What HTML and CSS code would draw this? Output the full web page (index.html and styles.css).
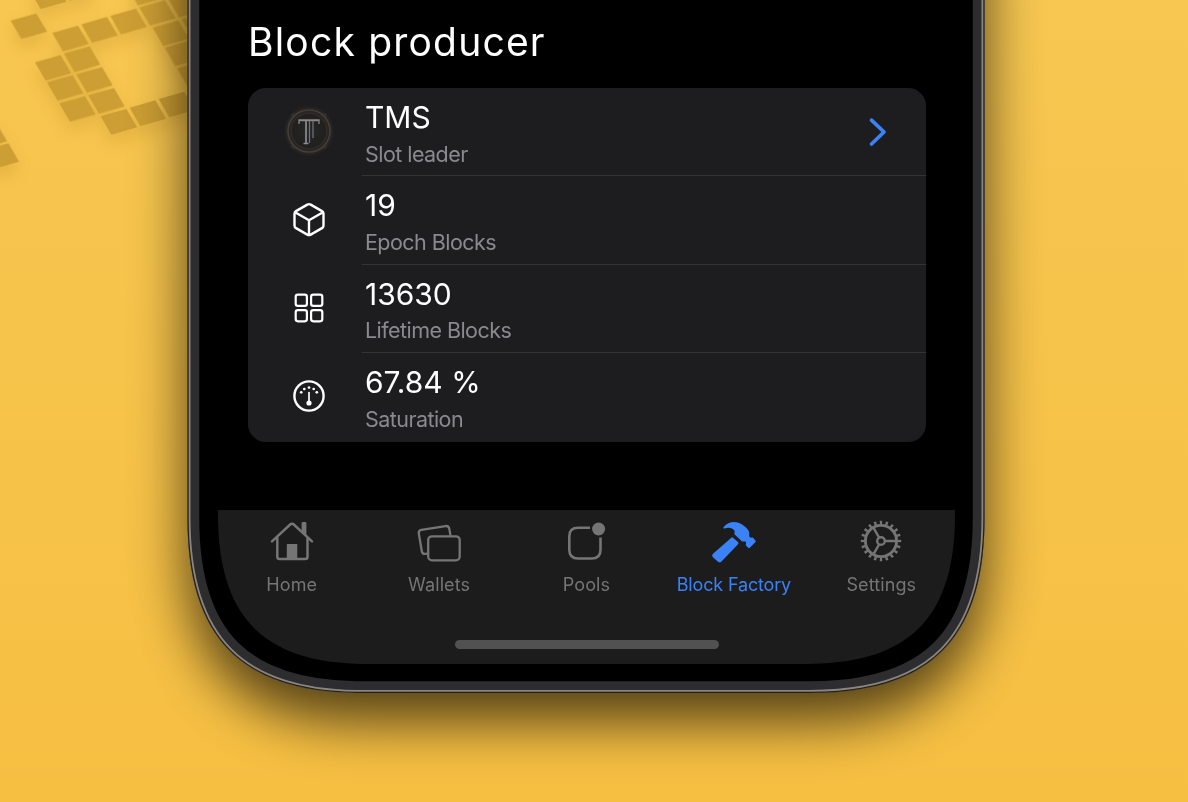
FILE: index.html
```html
<!DOCTYPE html>
<html lang="en">
<head>
<meta charset="utf-8">
<title>Block Factory</title>
<link rel="stylesheet" href="styles.css">
</head>
<body>
<svg class="backdrop" viewBox="0 0 1188 802" aria-hidden="true">
  <defs>
    <filter id="soft" x="-20%" y="-20%" width="140%" height="140%"><feGaussianBlur stdDeviation="28"/></filter>
    <filter id="tileShadow" x="-20%" y="-20%" width="140%" height="150%"><feGaussianBlur stdDeviation="24"/></filter>
    <path id="body" d="M187.5 -200V518C187.5 638.8 241.7 693 362.5 693H809.5C930.3 693 984.5 638.8 984.5 518V-200Z"/>
    <clipPath id="bodyClip"><use href="#body"/></clipPath>
    <path id="t" d="M0 0L77 -22L109 33L32 55Z"/>
    <g id="tiles">
      <use href="#t" x="32" y="62"/><use href="#t" x="90" y="-28"/><use href="#t" x="177" y="-53"/>
      <use href="#t" x="157" y="99"/><use href="#t" x="244" y="73"/><use href="#t" x="331" y="48"/><use href="#t" x="418" y="22"/>
      <use href="#t" x="382" y="-39"/><use href="#t" x="505" y="-3"/><use href="#t" x="469" y="-64"/>
      <use href="#t" x="192" y="161"/><use href="#t" x="105" y="187"/><use href="#t" x="229" y="223"/><use href="#t" x="141" y="247"/>
      <use href="#t" x="265" y="286"/><use href="#t" x="178" y="310"/><use href="#t" x="302" y="349"/><use href="#t" x="389" y="323"/><use href="#t" x="476" y="297"/>
      <use href="#t" x="458" y="83"/><use href="#t" x="545" y="58"/><use href="#t" x="494" y="143"/><use href="#t" x="531" y="205"/>
      <use href="#t" x="-52" y="452"/><use href="#t" x="-88" y="391"/>
    </g>
  </defs>
  <g transform="scale(.33333)">
    <use href="#tiles" y="26" fill="#9a6a10" opacity=".2" filter="url(#tileShadow)"/>
    <use href="#tiles" fill="#cc9e34"/>
  </g>
  <use href="#body" y="28" opacity=".68" filter="url(#soft)"/>
  <g clip-path="url(#bodyClip)">
    <use href="#body" fill="#000"/>
    <use href="#body" fill="none" stroke="#2d2d2f" stroke-width="23.5"/>
    <use href="#body" fill="none" stroke="#8b8581" stroke-width="6"/>
    <use href="#body" fill="none" stroke="#262016" stroke-width="2.4"/>
  </g>
</svg>
<main class="phone">
  <h1 class="title">Block producer</h1>
  <section class="card">
    <div class="row">
      <div class="icon">
        <svg width="60" height="60" viewBox="0 0 60 60" fill="none">
          <defs><radialGradient id="coin"><stop offset="0" stop-color="#262728"/><stop offset=".6" stop-color="#21201f"/><stop offset=".85" stop-color="#2b2724"/><stop offset="1" stop-color="#1d1d1f"/></radialGradient></defs>
          <circle cx="30" cy="30" r="25.500" fill="url(#coin)"/>
          <path d="M13 17v-4h5M42 13h5v4M13 43v4h5M42 47h5v-4" stroke="#38342f"/>
          <circle cx="30" cy="30" r="21" stroke="#443e38" stroke-width="1.500"/>
          <circle cx="30" cy="30" r="18" stroke="#34312e"/>
          <path d="M20 23v-4h20v4M20 19.500h20" stroke="#8c8884" stroke-width="1.300"/>
          <path d="M27 20v22M24.500 42.500h5" stroke="#8b8d8f" stroke-width="1.700"/>
          <path d="M30.500 20v22M34 20v17" stroke="#6e7275" stroke-width="1.300"/>
        </svg>
      </div>
      <div class="cell"><div class="value">TMS</div><div class="label">Slot leader</div>
        <svg class="chevron" width="20" height="30" viewBox="0 0 20 30" fill="none" stroke="#3b82f6" stroke-width="3.700" stroke-linecap="round" stroke-linejoin="round"><path d="M3.500 3.200L16 15L3.500 27"/></svg>
      </div>
    </div>
    <div class="row">
      <div class="icon"><svg width="36" height="36" viewBox="0 0 36 36" fill="none" stroke="#fff" stroke-width="2.400" stroke-linejoin="round" stroke-linecap="round"><path d="M16.300 2.600Q18 1.700 19.700 2.600L31 9.100Q32.500 10 32.500 11.700V23.500Q32.500 25.200 31 26.100L19.700 32.600Q18 33.500 16.300 32.600L5 26.100Q3.500 25.200 3.500 23.500V11.700Q3.500 10 5 9.100ZM4 10.300L18 18.200L32 10.300M18 18.200V33"/></svg></div>
      <div class="cell"><div class="value">19</div><div class="label">Epoch Blocks</div></div>
    </div>
    <div class="row">
      <div class="icon"><svg width="36" height="36" viewBox="0 0 36 36" fill="none" stroke="#fff" stroke-width="2.200"><rect x="4.700" y="4.700" width="11.200" height="11.200" rx="2.200"/><rect x="20.100" y="4.700" width="11.200" height="11.200" rx="2.200"/><rect x="4.700" y="20.100" width="11.200" height="11.200" rx="2.200"/><rect x="20.100" y="20.100" width="11.200" height="11.200" rx="2.200"/></svg></div>
      <div class="cell"><div class="value">13630</div><div class="label">Lifetime Blocks</div></div>
    </div>
    <div class="row">
      <div class="icon"><svg width="36" height="36" viewBox="0 0 36 36" fill="#fff"><circle cx="18" cy="18" r="14.600" fill="none" stroke="#fff" stroke-width="2.400"/><path d="M18 14.500V25" stroke="#fff" stroke-width="1.700" stroke-linecap="round"/><circle cx="18" cy="25" r="2.600"/><circle cx="10.200" cy="14.300" r="1.350"/><circle cx="13.300" cy="11" r="1.350"/><circle cx="18" cy="9.600" r="1.350"/><circle cx="22.700" cy="11" r="1.350"/><circle cx="25.800" cy="14.300" r="1.350"/></svg></div>
      <div class="cell"><div class="value">67.84 %</div><div class="label">Saturation</div></div>
    </div>
  </section>
  <nav class="tabs">
    <div class="tablist">
      <div class="tab"><svg width="48" height="44" viewBox="0 0 48 44" fill="none" stroke="#757575" stroke-width="2.500" stroke-linejoin="round" stroke-linecap="round"><path d="M4 21.400L22.200 4.500Q24 2.900 25.800 4.500L44 21.400M9.300 17.500V36.800Q9.300 39.100 11.600 39.100H37.200Q39.500 39.100 39.500 36.800V17.500"/><path d="M34.300 11.500V3.300Q34.300 2.800 34.800 2.800H37.200Q37.700 2.800 37.700 3.300V14.800Z" fill="#757575" stroke-width="1.400"/><path d="M19.500 24.800H28.600V39H19.500Z" fill="#757575" stroke-width="1.400"/></svg><span class="name">Home</span></div>
      <div class="tab"><svg width="48" height="44" viewBox="0 0 48 44" fill="none" stroke="#757575" stroke-width="2.300" stroke-linejoin="round" stroke-linecap="round"><rect x="13.200" y="16.300" width="31.500" height="24" rx="3.800"/><path d="M12.500 33.600L10.500 33.900Q7.300 34.300 6.800 31.300L3.800 13.500Q3.300 10.500 6.400 9.900L30.500 6.100Q33.500 5.600 34.200 8.600L35.400 14.800"/></svg><span class="name">Wallets</span></div>
      <div class="tab"><svg width="48" height="44" viewBox="0 0 48 44" fill="none" stroke="#757575" stroke-width="2.600"><path d="M28 7.700H16Q7.300 7.700 7.300 16.200V29.800Q7.300 38.500 16 38.500H29.800Q38.500 38.500 38.500 29.800V17.500"/><circle cx="36.600" cy="9" r="6.500" fill="#757575" stroke="none"/></svg><span class="name">Pools</span></div>
      <div class="tab active"><svg width="48" height="44" viewBox="0 0 48 44" fill="#3b82f6"><path transform="translate(-.5 -.6)" d="M14.200 7.700C17 4.500 20.500 2.700 24.500 2.700C30 2.700 34 5.600 38 9.800C40 11.900 40 13.500 39.700 16.200C39.600 17.500 40.600 18.600 42.300 18.200L43.300 18L45.900 21.200Q46.600 22 45.800 22.800L40.300 28.300Q39.300 29.200 38.400 28.200L36.200 25.800L36.600 23.500Q36.700 22.100 35.400 22.100Q33.700 22.300 32.300 21.900L25.200 15.200C24.400 14.300 25.600 12.500 24.900 11.200C23.500 8.500 19 7.500 15.300 9Q13 9.600 14.200 7.700Z"/><path transform="translate(-.5 -.6)" d="M21.800 18.400Q22.800 17.500 23.900 18.500L28.500 22.700Q29.600 23.800 28.500 24.900L12 42.100Q10.100 43.900 8.200 42.200L3.700 38.200Q1.600 36.200 3.800 34.200Z"/></svg><span class="name">Block Factory</span></div>
      <div class="tab"><svg width="48" height="44" viewBox="0 0 48 44" fill="none" stroke="#757575"><circle cx="24" cy="21" r="15.600" stroke-width="2.900"/><circle cx="24" cy="21" r="18.300" stroke-width="3.800" pathLength="160" stroke-dasharray="3.300 4.700" stroke-dashoffset="1.650"/><circle cx="24" cy="21" r="3.800" stroke-width="2.400"/><path d="M28.100 21H39M22 17.400L16.400 7.700M22 24.600L16.400 34.300" stroke-width="2.400"/></svg><span class="name">Settings</span></div>
    </div>
    <div class="home-bar"></div>
  </nav>
</main>
</body>
</html>
```
FILE: styles.css
```css
body {
  margin: 0;
  width: 1188px;
  height: 802px;
  overflow: hidden;
  background: linear-gradient(#f7c751, #f6bf42);
  font-family: Inter, "Liberation Sans", sans-serif;
}
.backdrop {
  position: absolute;
  inset: 0;
  width: 1188px;
  height: 802px;
}
.phone {
  position: relative;
  box-sizing: border-box;
  width: 737px;
  height: 664px;
  margin-left: 218px;
  padding-top: 17px;
  display: flex;
  flex-direction: column;
}
.title {
  margin: 0 0 21px 30px;
  height: 50px;
  line-height: 50px;
  font-size: 39px;
  font-weight: 400;
  letter-spacing: 1.2px;
  color: #fff;
  white-space: nowrap;
}
.card {
  width: 678px;
  height: 353.500px;
  margin-left: 29.500px;
  border-radius: 18px;
  background: #1d1d1f;
  display: grid;
  grid-template-rows: repeat(4, 1fr);
  overflow: hidden;
}
.row {
  display: grid;
  grid-template-columns: 114px 1fr;
}
.icon {
  display: flex;
  align-items: center;
  justify-content: center;
  padding: 0 0 2px 9.500px;
}
.cell {
  position: relative;
  box-sizing: border-box;
  padding: 10px 0 0 3.500px;
  border-bottom: 1px solid #343436;
}
.row:last-child .cell { border-bottom: 0; }
.value {
  height: 38px;
  line-height: 38px;
  font-size: 30px;
  color: #fff;
}
.label {
  height: 30px;
  margin-top: 2.500px;
  line-height: 30px;
  font-size: 21.5px;
  letter-spacing: -.55px;
  color: #8a8a8e;
}
.chevron {
  position: absolute;
  right: 38px;
  top: 29px;
}
.tabs {
  margin-top: auto;
  height: 154px;
  background: #1c1c1c;
  clip-path: path("M0 0V4C0 108 46 154 150 154H587C691 154 737 108 737 4V0Z");
  display: flex;
  flex-direction: column;
}
.tablist {
  display: grid;
  grid-template-columns: repeat(5, 1fr);
  padding-top: 10px;
}
.tab {
  display: flex;
  flex-direction: column;
  align-items: center;
  color: #757575;
}
.name {
  margin-top: 9px;
  line-height: 24px;
  font-size: 18px;
  letter-spacing: .1px;
  white-space: nowrap;
}
.active { color: #3b82f6; }
.active .name { letter-spacing: -.16px; }
.home-bar {
  width: 264px;
  height: 9px;
  margin: 43px auto 0;
  border-radius: 5px;
  background: #515151;
}
```
